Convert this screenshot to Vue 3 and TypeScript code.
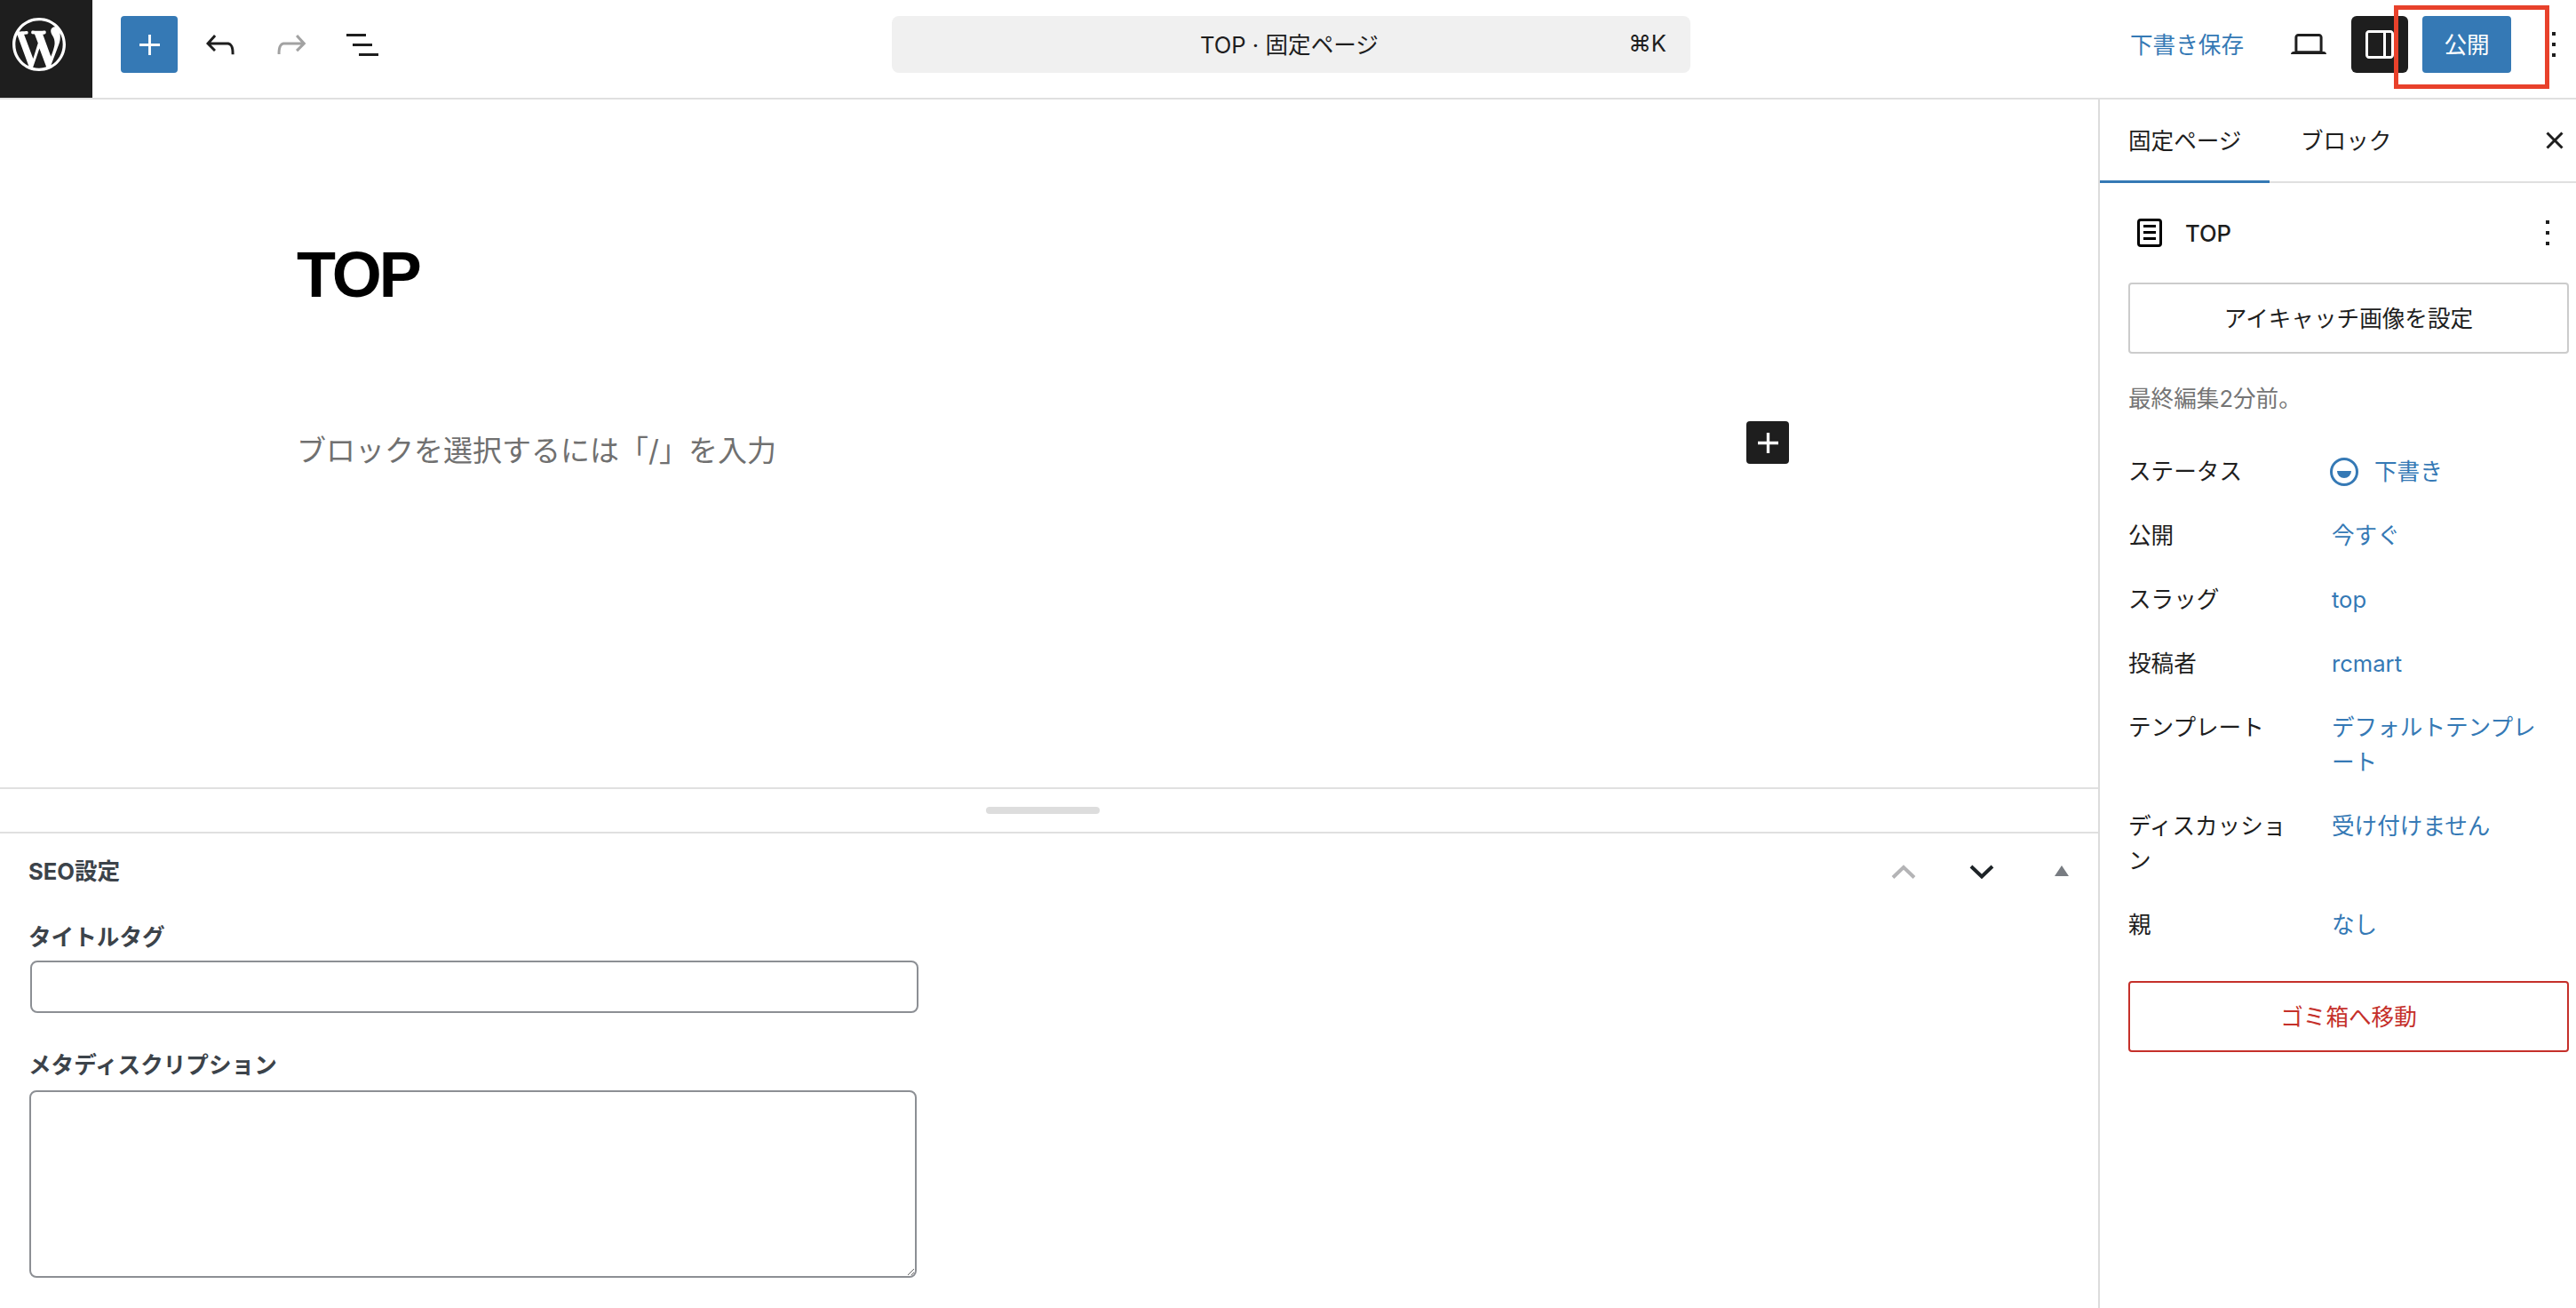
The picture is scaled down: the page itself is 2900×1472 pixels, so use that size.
<script setup lang="ts">
interface Row { label: string; value: string; status?: boolean }
const rows: Row[] = [
  { label: 'ステータス', value: '下書き', status: true },
  { label: '公開', value: '今すぐ' },
  { label: 'スラッグ', value: 'top' },
  { label: '投稿者', value: 'rcmart' },
  { label: 'テンプレート', value: 'デフォルトテンプレート' },
  { label: 'ディスカッション', value: '受け付けません' },
  { label: '親', value: 'なし' },
]
</script>

<template>
  <div class="app">
    <header class="topbar">
      <div class="wp">
        <svg class="wp-logo" viewBox="0 0 20 20"><path fill="#fff" d="M20 10c0-5.51-4.49-10-10-10C4.48 0 0 4.49 0 10c0 5.52 4.48 10 10 10 5.51 0 10-4.48 10-10zM7.78 15.37L4.37 6.22c.55-.02 1.17-.08 1.17-.08.5-.06.44-1.13-.06-1.11 0 0-1.45.11-2.37.11-.18 0-.37 0-.58-.01C4.12 2.69 6.87 1.11 10 1.11c2.33 0 4.45.87 6.05 2.34-.68-.11-1.65.39-1.65 1.58 0 .74.45 1.36.9 2.1.35.61.55 1.36.55 2.46 0 1.49-1.4 5-1.4 5l-3.03-8.37c.54-.02.82-.17.82-.17.5-.05.44-1.25-.06-1.22 0 0-1.44.12-2.38.12-.87 0-2.33-.12-2.33-.12-.5-.03-.56 1.2-.06 1.22l.92.08 1.26 3.41zM17.41 10c.24-.64.74-1.87.43-4.25.7 1.29 1.05 2.71 1.05 4.25 0 3.29-1.73 6.24-4.4 7.78.97-2.59 1.94-5.2 2.92-7.78zM6.1 18.09C3.12 16.65 1.11 13.53 1.11 10c0-1.3.23-2.48.72-3.59C3.25 10.3 4.67 14.2 6.1 18.09zm4.03-6.63l2.58 6.98c-.86.29-1.76.45-2.71.45-.79 0-1.57-.11-2.29-.33.81-2.38 1.62-4.74 2.42-7.1z"/></svg>
      </div>
      <div class="tools">
        <button class="add">
          <svg class="plus" viewBox="0 0 24 24"><path fill="#fff" d="M10.5 0h3v10.5H24v3H13.500V24h-3V13.500H0v-3h10.500z"/></svg>
        </button>
        <svg class="icon" viewBox="0 0 24 24"><path fill="#1e1e1e" d="M18.3 11.7c-.6-.6-1.4-.9-2.3-.9H6.7l2.9-3.3-1.1-1-4.5 5L8.5 16l1-1-2.7-2.7H16c.5 0 .9.2 1.3.5 1 1 1 3.400 1 4.500v.3h1.500v-.2c0-1.500 0-4.300-1.500-5.700z"/></svg>
        <svg class="icon" viewBox="0 0 24 24"><path fill="#a2a2a2" d="M15.600 6.500l-1.100 1 2.900 3.300H8c-.9 0-1.700.3-2.300.9-1.400 1.500-1.400 4.200-1.400 5.600v.2h1.500v-.3c0-1.100 0-3.500 1-4.500.3-.3.7-.5 1.300-.5h9.200L14.500 15l1.100 1.100 4.600-4.600-4.600-5z"/></svg>
        <svg class="icon" viewBox="0 0 24 24"><path fill="#1e1e1e" d="M3 6h11v1.500H3V6zm3.500 5.500h11V13h-11v-1.500zM21 17H10v1.500h11V17z"/></svg>
      </div>
      <div class="search">
        <span class="search-title">TOP · 固定ページ</span>
        <span class="search-key">⌘K</span>
      </div>
      <div class="actions">
        <span class="save">下書き保存</span>
        <svg class="icon" viewBox="0 0 24 24"><path fill="#1e1e1e" d="M20.500 16h-.7V8c0-1.100-.9-2-2-2H6.200c-1.100 0-2 .9-2 2v8h-.7c-.8 0-1.500.7-1.500 1.500h20c0-.8-.7-1.500-1.500-1.500zM5.700 8c0-.3.2-.5.5-.5h11.600c.3 0 .5.2.5.5v7.600H5.700V8z"/></svg>
        <button class="toggle">
          <svg class="icon" viewBox="0 0 24 24"><path fill="#fff" d="M18 4H6c-1.100 0-2 .9-2 2v12c0 1.100.9 2 2 2h12c1.100 0 2-.9 2-2V6c0-1.100-.9-2-2-2zm-4 14.500H6c-.3 0-.5-.2-.5-.5V6c0-.3.2-.5.5-.5h8v13zm4.500-.5c0 .3-.2.500-.5.500h-2.500v-13H18c.3 0 .5.2.5.5v12z"/></svg>
        </button>
        <button class="publish">公開</button>
        <svg class="icon" viewBox="0 0 24 24"><path fill="#1e1e1e" d="M13 19h-2v-2h2v2zm0-6h-2v-2h2v2zm0-6h-2V5h2v2z"/></svg>
      </div>
    </header>

    <div class="main">
      <div class="editor">
        <div class="canvas">
          <h1 class="title">TOP</h1>
          <div class="block-row">
            <p class="placeholder">ブロックを選択するには「/」を入力</p>
            <button class="inserter">
              <svg class="plus" viewBox="0 0 24 24"><path fill="#fff" d="M10.250 0h3.500v10.250H24v3.500H13.750V24h-3.500V13.750H0v-3.500h10.250z"/></svg>
            </button>
          </div>
        </div>
        <div class="resize"><span class="handle"></span></div>
        <section class="seo">
          <div class="seo-head">
            <h2 class="seo-title">SEO設定</h2>
            <div class="seo-ctrl">
              <svg class="chev" viewBox="0 0 28 16"><path d="M2 14.500 14 3l12 11.500" fill="none" stroke="#b4b4b6" stroke-width="4"/></svg>
              <svg class="chev" viewBox="0 0 28 16"><path d="M2 2l12 11.500L26 2" fill="none" stroke="#1d2327" stroke-width="4"/></svg>
              <svg class="tri" viewBox="0 0 16 12"><path d="M8 0l8 12H0z" fill="#787c82"/></svg>
            </div>
          </div>
          <label class="field-label first">タイトルタグ</label>
          <input class="text-input" type="text" />
          <label class="field-label second">メタディスクリプション</label>
          <textarea class="text-area"></textarea>
        </section>
      </div>

      <aside class="sidebar">
        <div class="tabs">
          <span class="tab active">固定ページ</span>
          <span class="tab">ブロック</span>
          <svg class="icon close" viewBox="0 0 24 24"><path fill="#1e1e1e" d="M12 13.060l3.712 3.713 1.061-1.060L13.061 12l3.712-3.712-1.060-1.060L12 10.938 8.288 7.227l-1.061 1.060L10.939 12l-3.712 3.712 1.060 1.061L12 13.061z"/></svg>
        </div>
        <div class="panel">
          <div class="doc">
            <svg class="icon" viewBox="0 0 24 24"><path fill="#000" d="M15.500 7.500h-7V9h7V7.500Zm-7 3.500h7v1.500h-7V11Zm7 3.500h-7V16h7v-1.500Z"/><path fill="#000" fill-rule="evenodd" d="M17 4H7a2 2 0 0 0-2 2v12a2 2 0 0 0 2 2h10a2 2 0 0 0 2-2V6a2 2 0 0 0-2-2ZM7 5.500h10a.5.5 0 0 1 .5.5v12a.5.5 0 0 1-.5.5H7a.5.5 0 0 1-.5-.5V6a.5.5 0 0 1 .5-.5Z"/></svg>
            <span class="doc-name">TOP</span>
            <svg class="icon doc-more" viewBox="0 0 24 24"><path fill="#1e1e1e" d="M13 19h-2v-2h2v2zm0-6h-2v-2h2v2zm0-6h-2V5h2v2z"/></svg>
          </div>
          <button class="wide feature">アイキャッチ画像を設定</button>
          <p class="edited">最終編集2分前。</p>
          <div class="rows">
            <div v-for="row in rows" :key="row.label" class="row">
              <span class="row-label">{{ row.label }}</span>
              <span class="row-value" :class="{ 'with-icon': row.status }">
                <svg v-if="row.status" class="status" viewBox="0 0 32 32"><circle cx="16" cy="16" r="14.500" fill="none" stroke="#3579b5" stroke-width="3"/><path d="M8 15h16a8 8 0 0 1-16 0z" fill="#3579b5"/></svg>
                {{ row.value }}
              </span>
            </div>
          </div>
          <button class="wide trash">ゴミ箱へ移動</button>
        </div>
      </aside>
    </div>

    <div class="annotation"></div>
  </div>
</template>

<style scoped>
.app {
  position: relative;
  width: 2900px;
  height: 1472px;
  display: flex;
  flex-direction: column;
  background: #fff;
  color: #1e1e1e;
  font-family: Inter, "Noto Sans CJK JP", sans-serif;
  font-size: 25.6px;
  overflow: hidden;
}
button { font: inherit; padding: 0; border: 0; cursor: pointer; }
.icon { width: 48px; height: 48px; display: block; flex: none; }
.plus { display: block; width: 23px; height: 23px; }

.topbar {
  height: 112px;
  box-sizing: border-box;
  flex: none;
  display: flex;
  align-items: flex-start;
  border-bottom: 2px solid #e0e0e0;
  position: relative;
}
.wp {
  width: 104px;
  height: 110px;
  background: #1e1e1e;
  flex: none;
  padding: 20px 0 0 14px;
  box-sizing: border-box;
}
.wp-logo { display: block; width: 60px; height: 60px; }
.tools {
  display: flex;
  align-items: center;
  height: 100px;
  margin-left: 32px;
  gap: 32px;
  width: 296px;
  flex: none;
}
.add {
  width: 64px;
  height: 64px;
  border-radius: 4px;
  background: #3579b5;
  display: flex;
  align-items: center;
  justify-content: center;
  margin-right: -8px;
}
.search {
  width: 899px;
  height: 64px;
  margin: 18px 0 0 572px;
  background: #f0f0f0;
  border-radius: 8px;
  flex: none;
  display: flex;
  align-items: center;
  padding: 0 27px 3px 347px;
  box-sizing: border-box;
  justify-content: space-between;
}
.actions {
  display: flex;
  align-items: center;
  height: 100px;
  flex: none;
  margin-left: 495px;
}
.save { color: #3579b5; width: 177px; flex: none; padding-bottom: 3px; }
.toggle {
  width: 64px;
  height: 64px;
  background: #1e1e1e;
  border-radius: 6px;
  margin-left: 24px;
  display: flex;
  align-items: center;
  justify-content: center;
}
.publish {
  width: 100px;
  height: 64px;
  background: #3579b5;
  color: #fff;
  border-radius: 4px;
  margin: 0 24px 0 16px;
  padding-bottom: 3px;
}

.main { flex: 1; display: flex; min-height: 0; }
.editor { width: 2362px; flex: none; display: flex; flex-direction: column; }
.canvas {
  height: 776px;
  flex: none;
  padding: 157px 0 0 334px;
  box-sizing: border-box;
  border-bottom: 2px solid #e0e0e0;
}
.title {
  margin: 0;
  font-family: "Liberation Sans", sans-serif;
  font-size: 72px;
  letter-spacing: -3px;
  font-weight: 700;
  line-height: 80px;
  color: #000;
}
.block-row {
  width: 1680px;
  margin-top: 125px;
  display: flex;
  justify-content: space-between;
  align-items: flex-start;
}
.placeholder {
  margin: 9px 0 0;
  font-size: 33px;
  line-height: 48px;
  color: #707070;
}
.inserter {
  width: 48px;
  height: 48px;
  background: #1e1e1e;
  border-radius: 4px;
  display: flex;
  align-items: center;
  justify-content: center;
}
.resize {
  height: 50px;
  flex: none;
  box-sizing: border-box;
  border-bottom: 2px solid #e0e0e0;
  display: flex;
  align-items: center;
  justify-content: center;
}
.handle {
  display: block;
  width: 128px;
  height: 8px;
  border-radius: 4px;
  background: #ddd;
  margin-right: 14px;
}
.seo { padding: 23px 0 0 32px; flex: 1; min-height: 0; }
.seo-head { display: flex; align-items: center; height: 40px; }
.seo-title { margin: 0; font-size: 25.6px; font-weight: 700; color: #3c434a; line-height: 40px; }
.seo-ctrl {
  margin-left: auto;
  display: flex;
  align-items: center;
  padding-right: 33px;
}
.chev { display: block; width: 28px; height: 16px; margin-right: 60px; }
.tri { display: block; width: 16px; height: 12px; margin: -3px 0 0 8px; }
.field-label { display: block; font-size: 25.6px; font-weight: 700; color: #3c434a; line-height: 40px; }
.field-label.first { margin-top: 34px; }
.field-label.second { margin-top: 39px; }
.text-input {
  display: block;
  width: 1000px;
  height: 59px;
  margin: 6px 0 0 2px;
  box-sizing: border-box;
  border: 2px solid #8c8f94;
  border-radius: 8px;
  background: #fff;
}
.text-area {
  display: block;
  width: 999px;
  height: 211px;
  margin: 8px 0 0 1px;
  box-sizing: border-box;
  border: 2px solid #8c8f94;
  border-radius: 8px;
  background: #fff;
}

.sidebar {
  width: 538px;
  flex: none;
  border-left: 2px solid #dcdcdc;
  box-sizing: border-box;
  display: flex;
  flex-direction: column;
}
.tabs {
  height: 94px;
  flex: none;
  box-sizing: border-box;
  border-bottom: 2px solid #e0e0e0;
  display: flex;
  align-items: flex-start;
}
.tab {
  display: flex;
  align-items: center;
  height: 88px;
  padding: 0 0 0 35px;
}
.tab.active {
  width: 129px;
  padding: 0 30px 6px 32px;
  box-sizing: content-box;
  height: 88px;
  box-shadow: inset 0 -3px 0 #3579b5;
}
.close { margin: 22px 0 0 auto; }
.panel { padding: 0 8px 0 32px; display: flex; flex-direction: column; }
.doc { display: flex; align-items: center; height: 48px; margin-top: 32px; }
.doc-name { margin-left: 16px; font-weight: 500; }
.doc-more { margin-left: auto; margin-right: 0; }
.wide {
  width: 496px;
  height: 80px;
  border-radius: 4px;
  background: #fff;
  box-sizing: border-box;
  text-align: center;
  padding-bottom: 3px;
}
.feature { margin-top: 32px; border: 2px solid #ccc; color: #1e1e1e; }
.edited { margin: 31px 0 0; line-height: 40px; color: #757575; }
.rows { margin-top: 42px; display: flex; flex-direction: column; gap: 33px; }
.row { display: flex; line-height: 39px; }
.row-label { width: 195px; flex: none; margin-right: 34px; }
.row-value { color: #3579b5; width: 240px; flex: none; }
.row-value.with-icon { display: flex; align-items: center; gap: 18px; margin-left: -2px; }
.status { width: 32px; height: 32px; flex: none; display: block; }
.trash { margin-top: 44px; border: 2px solid #c5302a; color: #c5302a; }

.annotation {
  position: absolute;
  left: 2695px;
  top: 6px;
  width: 175px;
  height: 94px;
  box-sizing: border-box;
  border: 5px solid #e8412b;
}
</style>

<style>
html, body { margin: 0; background: #fff; overflow: hidden; }
</style>
